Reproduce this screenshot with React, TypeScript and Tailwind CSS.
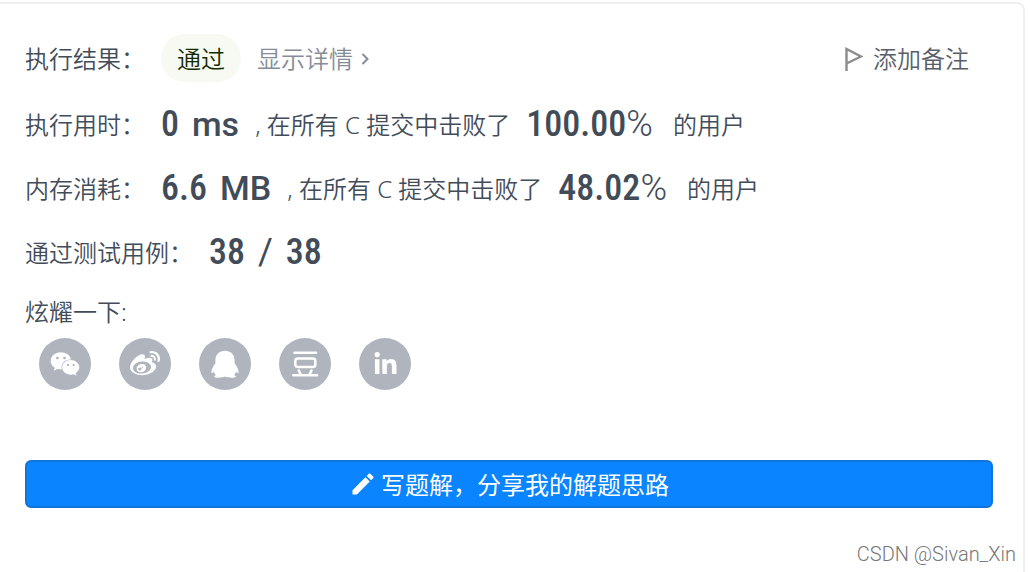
import type { ReactNode } from "react";
import { FaLinkedinIn, FaWeibo, FaWeixin } from "react-icons/fa";
import { MdEdit } from "react-icons/md";

type StatRowProps = { label: string; value: string; unit: string; percent: string };

function FlagIcon() {
  return (
    <svg viewBox="0 0 18 24" className="w-[18px] h-6" fill="none" stroke="#8c8c8c" strokeWidth="2.4" aria-hidden="true">
      <path d="M1.500 24V2L16 9.500L1.500 16.500" />
    </svg>
  );
}

function QqIcon() {
  return (
    <svg viewBox="0 0 28 28" className="size-7" fill="currentColor" aria-hidden="true">
      <path d="M14 .8c5.6 0 9.600 3.800 9.600 9.500 0 1 .1 2.200-.1 3 1.700 2.200 4 5.400 4.100 8.600 0 1.800-1.100 1.600-2.500-.4-.4 1.600-1.100 2.700-2.100 3.700 1.600.4 2 1.100 1.700 1.700-.9 1.100-8.200 1-10.700-.4-2.500 1.400-9.800 1.500-10.700.4-.3-.6.100-1.300 1.700-1.700-1-1-1.700-2.100-2.100-3.700-1.400 2-2.500 2.200-2.500.4.100-3.200 2.400-6.400 4.100-8.600-.2-.8-.1-2-.1-3C4.400 4.600 8.400.8 14 .8z" />
    </svg>
  );
}

function DoubanIcon() {
  return (
    <svg
      viewBox="0 0 28 28"
      className="size-7"
      fill="none"
      stroke="currentColor"
      strokeWidth="2.6"
      strokeLinecap="round"
      aria-hidden="true"
    >
      <path d="M3.500 2.800H25M2.300 25.300H26M7.800 20.500L9.800 24.500M20.500 20.500L18.500 24.500" />
      <rect x="4.300" y="8.500" width="20" height="8.500" rx="2.500" />
    </svg>
  );
}

const shares: { name: string; icon: ReactNode }[] = [
  { name: "微信", icon: <FaWeixin size={30} /> },
  { name: "微博", icon: <FaWeibo size={30} /> },
  { name: "QQ", icon: <QqIcon /> },
  { name: "豆瓣", icon: <DoubanIcon /> },
  { name: "LinkedIn", icon: <FaLinkedinIn size={25} /> },
];

function Figure({ children }: { children: ReactNode }) {
  return <span className="font-['Roboto_Condensed',Roboto,sans-serif] text-4xl leading-[62px] font-medium">{children}</span>;
}

function StatRow({ label, value, unit, percent }: StatRowProps) {
  return (
    <div className="flex items-start gap-4 h-16 leading-[64px] whitespace-nowrap">
      <span>{label}：</span>
      <span className="flex items-baseline gap-[13px]">
        <Figure>{value}</Figure>
        <span className="font-[Roboto,sans-serif] text-[34px] leading-[62px] font-medium">{unit}</span>
      </span>
      <span>, 在所有 C 提交中击败了</span>
      <Figure>
        {percent}
        <span className="font-[Roboto,sans-serif] font-light">%</span>
      </Figure>
      <span className="pl-1">的用户</span>
    </div>
  );
}

export default function App() {
  return (
    <div className="bg-white pt-[2px] pr-[5px] min-h-screen flex font-['Noto_Sans','Noto_Sans_CJK_SC',sans-serif] text-2xl font-[350] text-[#424c59]">
      <main className="relative flex-1 border-t-2 border-r-2 border-[#f0f0f0] rounded-tr-lg pl-[25px] pr-[30px] pt-[30px]">
        <div className="flex items-start h-12 mb-[11px] leading-[50px] whitespace-nowrap">
          <span>执行结果：</span>
          <span className="ml-4 h-12 px-4 rounded-full bg-[#f7faf3] text-[#142b00]">通过</span>
          <a href="#detail" className="ml-4 flex items-center gap-2 text-[#858c98]">
            显示详情
            <svg viewBox="0 0 8 12" className="w-2 h-3" fill="none" stroke="currentColor" strokeWidth="2" aria-hidden="true">
              <path d="M1.500 1L6.500 6L1.500 11" />
            </svg>
          </a>
          <button className="ml-auto mr-6 flex items-center gap-[10px] text-[#595f69]">
            <FlagIcon />
            添加备注
          </button>
        </div>

        <StatRow label="执行用时" value="0" unit="ms" percent="100.00" />
        <StatRow label="内存消耗" value="6.6" unit="MB" percent="48.02" />
        <div className="flex items-start gap-4 h-16 leading-[64px] whitespace-nowrap">
          <span>通过测试用例：</span>
          <span className="flex items-baseline gap-[13px]">
            <Figure>38</Figure>
            <span className="font-[Roboto,sans-serif] text-4xl leading-[62px] font-normal">/</span>
            <Figure>38</Figure>
          </span>
        </div>

        <p className="mt-[5px] h-11 leading-[44px]">炫耀一下:</p>
        <div className="mt-1 ml-[14px] flex gap-7">
          {shares.map((share) => (
            <button
              key={share.name}
              aria-label={share.name}
              className="size-[52px] rounded-full bg-[#afb4bd] text-white flex items-center justify-center"
            >
              {share.icon}
            </button>
          ))}
        </div>

        <button className="mt-[70px] w-full h-12 rounded-md border-2 border-[#0f75d8] bg-[#0a84ff] text-white font-normal flex items-center justify-center gap-1">
          <MdEdit size={28} aria-hidden="true" />
          <span className="pt-[2px]">写题解，分享我的解题思路</span>
        </button>

        <span className="absolute right-[7px] bottom-[6px] font-[Roboto,sans-serif] text-xl leading-6 font-light text-[#777777]">
          CSDN @Sivan_Xin
        </span>
      </main>
    </div>
  );
}
